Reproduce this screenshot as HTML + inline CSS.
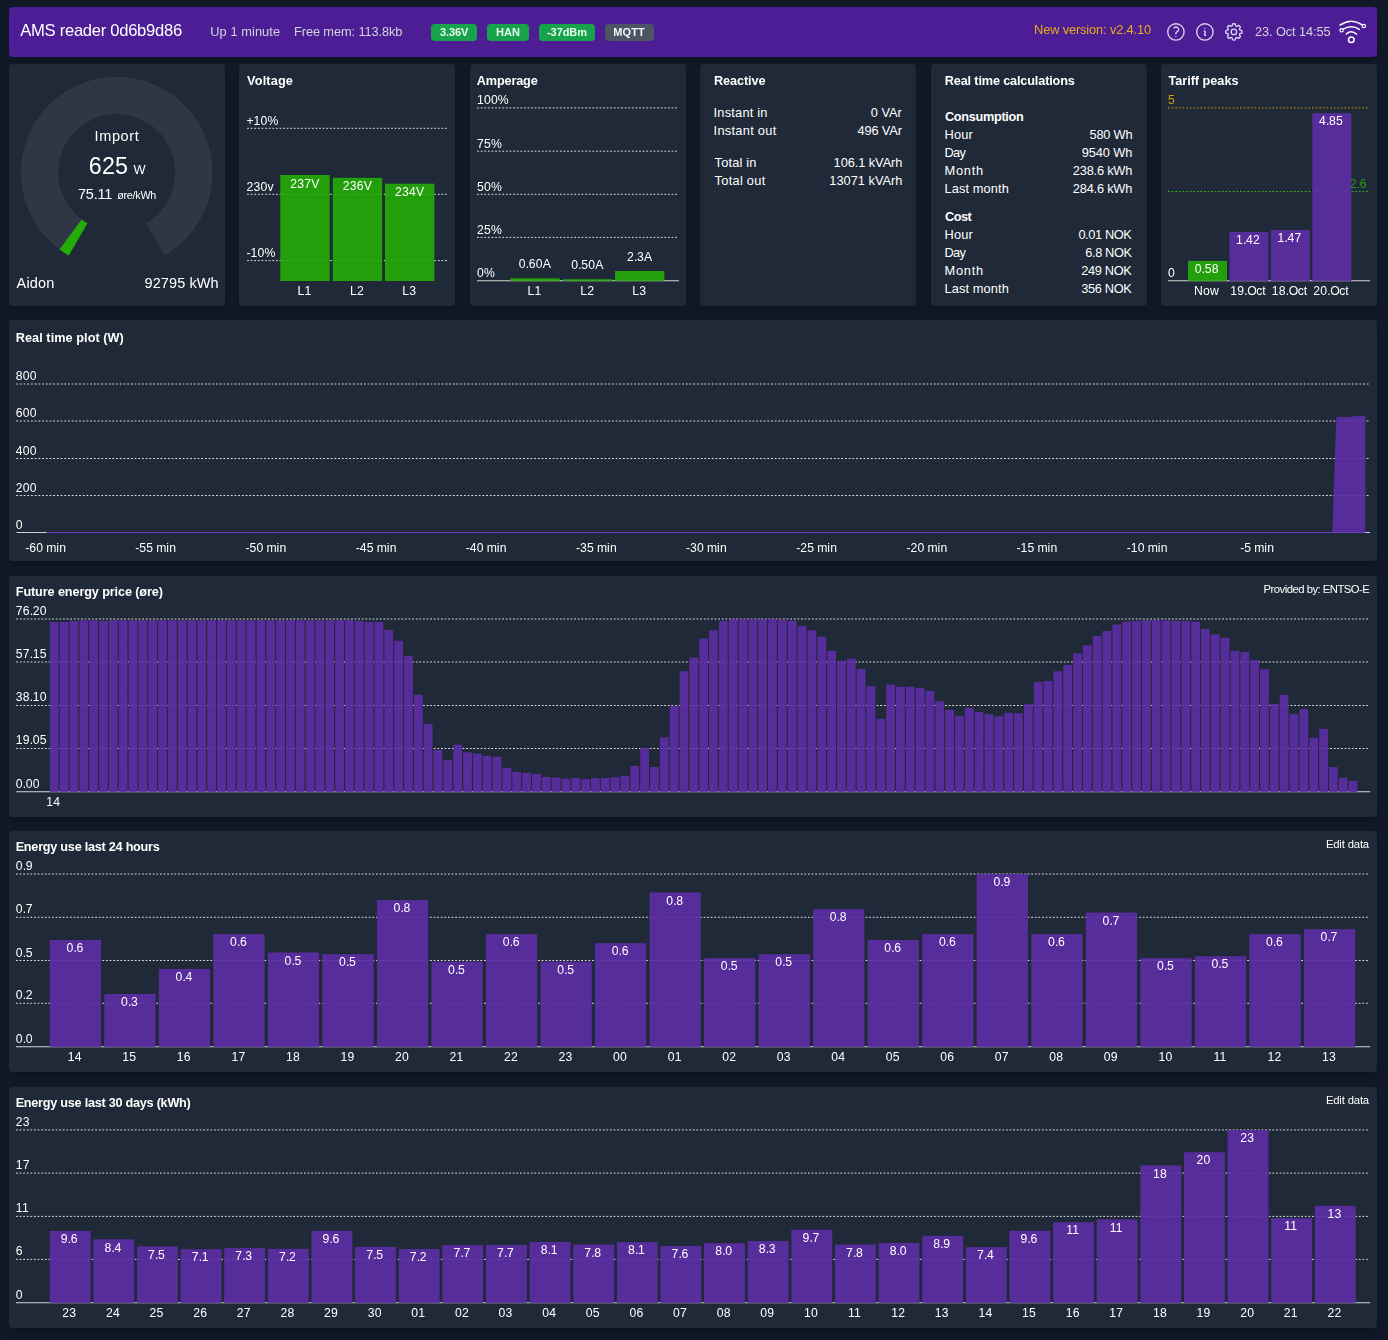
<!DOCTYPE html>
<html lang="en"><head><meta charset="utf-8"><title>AMS reader</title>
<style>
html,body{margin:0;padding:0;background:#111827}
body{position:relative;width:1388px;height:1340px;overflow:hidden;font-family:"Liberation Sans",sans-serif;color:#fff}
.hdr{position:absolute;left:9px;top:7px;width:1368px;height:50px;background:#4c1d95;border-radius:3.75px;box-shadow:0 4px 6px -1px rgba(0,0,0,.2)}
.cnt{position:absolute;background:#1f2937;border-radius:3.75px;box-shadow:0 8px 12px -3px rgba(0,0,0,.12),0 3px 5px -2px rgba(0,0,0,.1)}
.bd{position:absolute;top:24px;height:17px;border-radius:3.75px}
.t{position:absolute;white-space:pre;line-height:1}
.c{position:absolute;overflow:visible;will-change:transform}
</style></head><body>
<nav class="hdr"></nav>
<div class="bd" style="left:431px;width:46px;background:#16a34a"></div><div class="bd" style="left:487px;width:42px;background:#16a34a"></div><div class="bd" style="left:539px;width:56px;background:#16a34a"></div><div class="bd" style="left:605px;width:49px;background:#4b5563"></div>
<div class="cnt" style="left:9px;top:64px;width:216px;height:242px"></div><div class="cnt" style="left:239px;top:64px;width:216px;height:242px"></div><div class="cnt" style="left:470px;top:64px;width:216px;height:242px"></div><div class="cnt" style="left:700px;top:64px;width:216px;height:242px"></div><div class="cnt" style="left:931px;top:64px;width:216px;height:242px"></div><div class="cnt" style="left:1161px;top:64px;width:216px;height:242px"></div><div class="cnt" style="left:9px;top:320px;width:1368px;height:241px"></div><div class="cnt" style="left:9px;top:576px;width:1368px;height:241px"></div><div class="cnt" style="left:9px;top:831px;width:1368px;height:241px"></div><div class="cnt" style="left:9px;top:1087px;width:1368px;height:241px"></div>
<svg class="c" style="left:9px;top:64px" width="216" height="242" viewBox="9 64 216 242" font-family="Liberation Sans, sans-serif" font-size="12.2" fill="#fff"><path d="M 155.27 239.41 A 77.15 77.15 0 1 0 78.13 239.41" fill="none" stroke="#2f3744" stroke-width="37.3"/><path d="M 70.59 234.46 A 77.15 77.15 0 0 0 78.13 239.41" fill="none" stroke="#25ac08" stroke-width="37.3"/></svg>
<svg class="c" style="left:239px;top:64px" width="217" height="242" viewBox="239 64 217 242" font-family="Liberation Sans, sans-serif" font-size="12.2" fill="#fff"><line x1="247.1" y1="128.3" x2="447.1" y2="128.3" stroke="#dedede" stroke-width="1.0" stroke-dasharray="1.8 1.8"/><line x1="247.1" y1="194.3" x2="447.1" y2="194.3" stroke="#dedede" stroke-width="1.0" stroke-dasharray="1.8 1.8"/><line x1="247.1" y1="260.6" x2="447.1" y2="260.6" stroke="#dedede" stroke-width="1.0" stroke-dasharray="1.8 1.8"/><text x="246.6" y="125" dx="0 -0.12 0.21 0.21">+10%</text><text x="246.6" y="191" dx="0 0.21 0.21 0.21">230v</text><text x="246.6" y="257" dx="0 -0.06 0.21 0.21">-10%</text><rect x="280.3" y="175" width="49.4" height="106" fill="#25ac08" fill-opacity="0.9"/><rect x="332.8" y="177.8" width="49.4" height="103.2" fill="#25ac08" fill-opacity="0.9"/><rect x="385" y="183.7" width="49.4" height="97.3" fill="#25ac08" fill-opacity="0.9"/><text x="304.77" y="187.6" text-anchor="middle" dx="0 0.21 0.21 0.21">237V</text><text x="304.49" y="295" text-anchor="middle" dx="0 0.21">L1</text><text x="357.27" y="190.4" text-anchor="middle" dx="0 0.21 0.21 0.21">236V</text><text x="356.99" y="295" text-anchor="middle" dx="0 0.21">L2</text><text x="409.47" y="196.3" text-anchor="middle" dx="0 0.21 0.21 0.21">234V</text><text x="409.19" y="295" text-anchor="middle" dx="0 0.21">L3</text></svg>
<svg class="c" style="left:470px;top:64px" width="217" height="242" viewBox="470 64 217 242" font-family="Liberation Sans, sans-serif" font-size="12.2" fill="#fff"><line x1="477.1" y1="107.9" x2="677.1" y2="107.9" stroke="#dedede" stroke-width="1.0" stroke-dasharray="1.8 1.8"/><line x1="477.1" y1="151.2" x2="677.1" y2="151.2" stroke="#dedede" stroke-width="1.0" stroke-dasharray="1.8 1.8"/><line x1="477.1" y1="194.3" x2="677.1" y2="194.3" stroke="#dedede" stroke-width="1.0" stroke-dasharray="1.8 1.8"/><line x1="477.1" y1="237.4" x2="677.1" y2="237.4" stroke="#dedede" stroke-width="1.0" stroke-dasharray="1.8 1.8"/><line x1="477" y1="280.8" x2="679" y2="280.8" stroke="#d8d8d8" stroke-width="1.1"/><text x="476.9" y="104" dx="0 0.21 0.21 0.21">100%</text><text x="476.9" y="148" dx="0 0.21 0.21">75%</text><text x="476.9" y="191" dx="0 0.21 0.21">50%</text><text x="476.9" y="234" dx="0 0.21 0.21">25%</text><text x="476.9" y="277" dx="0 0.21">0%</text><rect x="510.3" y="278.3" width="49.4" height="2.7" fill="#25ac08" fill-opacity="0.9"/><rect x="562.9" y="279.2" width="49.4" height="1.8" fill="#25ac08" fill-opacity="0.9"/><rect x="615" y="271" width="49.4" height="10" fill="#25ac08" fill-opacity="0.9"/><text x="534.77" y="267.5" text-anchor="middle" dx="0 0.21 -0.39 0.21 0.21">0.60A</text><text x="534.49" y="295" text-anchor="middle" dx="0 0.21">L1</text><text x="587.37" y="268.6" text-anchor="middle" dx="0 0.21 -0.39 0.21 0.21">0.50A</text><text x="587.09" y="295" text-anchor="middle" dx="0 0.21">L2</text><text x="639.47" y="260.6" text-anchor="middle" dx="0 0.21 -0.39 0.21">2.3A</text><text x="639.19" y="295" text-anchor="middle" dx="0 0.21">L3</text></svg>
<svg class="c" style="left:1161px;top:64px" width="217" height="242" viewBox="1161 64 217 242" font-family="Liberation Sans, sans-serif" font-size="12.2" fill="#fff"><line x1="1168" y1="107.9" x2="1368" y2="107.9" stroke="#b8960c" stroke-width="1.0" stroke-dasharray="1.8 1.8"/><line x1="1168" y1="191.5" x2="1368" y2="191.5" stroke="#2fb010" stroke-width="1.0" stroke-dasharray="1.8 1.8"/><line x1="1168" y1="280.8" x2="1370" y2="280.8" stroke="#d8d8d8" stroke-width="1.1"/><text x="1167.9" y="104" fill="#c9a410">5</text><text x="1366.59" y="188" text-anchor="end" fill="#2a9a12" dx="0 0.21 -0.39">2.6</text><text x="1167.9" y="277">0</text><rect x="1188" y="260.9" width="39" height="20.1" fill="#25ac08" fill-opacity="0.9"/><rect x="1229.4" y="232" width="39" height="49" fill="#5c2da5" fill-opacity="0.9"/><rect x="1270.9" y="230" width="39" height="51" fill="#5c2da5" fill-opacity="0.9"/><rect x="1312.3" y="113.2" width="39" height="167.8" fill="#5c2da5" fill-opacity="0.9"/><text x="1206.59" y="273.1" text-anchor="middle" dx="0 0.21 -0.39 0.21">0.58</text><text x="1206.31" y="295" text-anchor="middle" dx="0 0.19 0.21">Now</text><text x="1247.99" y="244.2" text-anchor="middle" dx="0 0.21 -0.39 0.21">1.42</text><text x="1247.99" y="295" text-anchor="middle" dx="0 0.21 0.21 -0.39 -0.49 -0.1">19.Oct</text><text x="1289.49" y="242.2" text-anchor="middle" dx="0 0.21 -0.39 0.21">1.47</text><text x="1289.49" y="295" text-anchor="middle" dx="0 0.21 0.21 -0.39 -0.49 -0.1">18.Oct</text><text x="1330.89" y="125.4" text-anchor="middle" dx="0 0.21 -0.39 0.21">4.85</text><text x="1330.89" y="295" text-anchor="middle" dx="0 0.21 0.21 -0.39 -0.49 -0.1">20.Oct</text></svg>
<svg class="c" style="left:9px;top:320px" width="1369" height="241" viewBox="9 320 1369 241" font-family="Liberation Sans, sans-serif" font-size="12.2" fill="#fff"><line x1="16.2" y1="384" x2="1370" y2="384" stroke="#dedede" stroke-width="1.0" stroke-dasharray="1.85 1.85"/><line x1="16.2" y1="421" x2="1370" y2="421" stroke="#dedede" stroke-width="1.0" stroke-dasharray="1.85 1.85"/><line x1="16.2" y1="458.5" x2="1370" y2="458.5" stroke="#dedede" stroke-width="1.0" stroke-dasharray="1.85 1.85"/><line x1="16.2" y1="495.5" x2="1370" y2="495.5" stroke="#dedede" stroke-width="1.0" stroke-dasharray="1.85 1.85"/><line x1="16.5" y1="532.5" x2="1370" y2="532.5" stroke="#d0d0d0" stroke-width="1"/><text x="15.8" y="380" dx="0 0.21 0.21">800</text><text x="15.8" y="417" dx="0 0.21 0.21">600</text><text x="15.8" y="455" dx="0 0.21 0.21">400</text><text x="15.8" y="492" dx="0 0.21 0.21">200</text><text x="15.8" y="529">0</text><text x="45.59" y="552" text-anchor="middle" dx="0 -0.06 0.21 0.21 -0.39 -0.16 0.29">-60 min</text><text x="155.74" y="552" text-anchor="middle" dx="0 -0.06 0.21 0.21 -0.39 -0.16 0.29">-55 min</text><text x="265.89" y="552" text-anchor="middle" dx="0 -0.06 0.21 0.21 -0.39 -0.16 0.29">-50 min</text><text x="376.04" y="552" text-anchor="middle" dx="0 -0.06 0.21 0.21 -0.39 -0.16 0.29">-45 min</text><text x="486.19" y="552" text-anchor="middle" dx="0 -0.06 0.21 0.21 -0.39 -0.16 0.29">-40 min</text><text x="596.34" y="552" text-anchor="middle" dx="0 -0.06 0.21 0.21 -0.39 -0.16 0.29">-35 min</text><text x="706.49" y="552" text-anchor="middle" dx="0 -0.06 0.21 0.21 -0.39 -0.16 0.29">-30 min</text><text x="816.64" y="552" text-anchor="middle" dx="0 -0.06 0.21 0.21 -0.39 -0.16 0.29">-25 min</text><text x="926.79" y="552" text-anchor="middle" dx="0 -0.06 0.21 0.21 -0.39 -0.16 0.29">-20 min</text><text x="1036.94" y="552" text-anchor="middle" dx="0 -0.06 0.21 0.21 -0.39 -0.16 0.29">-15 min</text><text x="1147.09" y="552" text-anchor="middle" dx="0 -0.06 0.21 0.21 -0.39 -0.16 0.29">-10 min</text><text x="1257.24" y="552" text-anchor="middle" dx="0 -0.06 0.21 -0.39 -0.16 0.29">-5 min</text><path d="M 1332.3 532 L 1336.3 417 L 1350.7 417 L 1353.7 416 L 1365.4 415.8 L 1365.4 532 Z" fill="#5c2da5" fill-opacity="0.9"/><line x1="46.4" y1="532.5" x2="1365.4" y2="532.5" stroke="#6f42bd" stroke-width="1"/></svg>
<svg class="c" style="left:9px;top:576px" width="1369" height="241" viewBox="9 576 1369 241" font-family="Liberation Sans, sans-serif" font-size="12.2" fill="#fff"><line x1="16.2" y1="619" x2="1368.1" y2="619" stroke="#dedede" stroke-width="1.0" stroke-dasharray="1.8 1.8"/><line x1="16.2" y1="662" x2="1368.1" y2="662" stroke="#dedede" stroke-width="1.0" stroke-dasharray="1.8 1.8"/><line x1="16.2" y1="705.5" x2="1368.1" y2="705.5" stroke="#dedede" stroke-width="1.0" stroke-dasharray="1.8 1.8"/><line x1="16.2" y1="748.5" x2="1368.1" y2="748.5" stroke="#dedede" stroke-width="1.0" stroke-dasharray="1.8 1.8"/><line x1="16.2" y1="791.8" x2="1370.2" y2="791.8" stroke="#d8d8d8" stroke-width="1.1"/><text x="15.8" y="615" dx="0 0.21 0.21 -0.39 0.21">76.20</text><text x="15.8" y="658" dx="0 0.21 0.21 -0.39 0.21">57.15</text><text x="15.8" y="701" dx="0 0.21 0.21 -0.39 0.21">38.10</text><text x="15.8" y="744" dx="0 0.21 0.21 -0.39 0.21">19.05</text><text x="15.8" y="788" dx="0 0.21 -0.39 0.21">0.00</text><path d="M49.86 621.96h8.8V792h-8.8zM59.7 621.96h8.8V792h-8.8zM69.54 621.1h8.8V792h-8.8zM79.38 620.23h8.8V792h-8.8zM89.22 620.23h8.8V792h-8.8zM99.06 621.1h8.8V792h-8.8zM108.89 620.23h8.8V792h-8.8zM118.73 620.23h8.8V792h-8.8zM128.57 620.23h8.8V792h-8.8zM138.41 620.23h8.8V792h-8.8zM148.25 620.23h8.8V792h-8.8zM158.09 620.23h8.8V792h-8.8zM167.93 620.23h8.8V792h-8.8zM177.77 620.23h8.8V792h-8.8zM187.61 620.23h8.8V792h-8.8zM197.44 620.23h8.8V792h-8.8zM207.28 620.23h8.8V792h-8.8zM217.12 620.23h8.8V792h-8.8zM226.96 620.23h8.8V792h-8.8zM236.8 620.23h8.8V792h-8.8zM246.64 620.23h8.8V792h-8.8zM256.48 620.23h8.8V792h-8.8zM266.32 620.23h8.8V792h-8.8zM276.16 620.23h8.8V792h-8.8zM286 620.23h8.8V792h-8.8zM295.84 620.23h8.8V792h-8.8zM305.67 620.23h8.8V792h-8.8zM315.51 620.23h8.8V792h-8.8zM325.35 620.23h8.8V792h-8.8zM335.19 620.23h8.8V792h-8.8zM345.03 620.23h8.8V792h-8.8zM354.87 621.1h8.8V792h-8.8zM364.71 621.96h8.8V792h-8.8zM374.55 621.96h8.8V792h-8.8zM384.39 629.92h8.8V792h-8.8zM394.23 640.64h8.8V792h-8.8zM404.06 656.03h8.8V792h-8.8zM413.9 694.76h8.8V792h-8.8zM423.74 723.98h8.8V792h-8.8zM433.58 750.1h8.8V792h-8.8zM443.42 760.3h8.8V792h-8.8zM453.26 744.73h8.8V792h-8.8zM463.1 752.34h8.8V792h-8.8zM472.94 753.55h8.8V792h-8.8zM482.78 755.97h8.8V792h-8.8zM492.62 756.84h8.8V792h-8.8zM502.45 767.73h8.8V792h-8.8zM512.29 772.06h8.8V792h-8.8zM522.13 773.09h8.8V792h-8.8zM531.97 773.96h8.8V792h-8.8zM541.81 776.9h8.8V792h-8.8zM551.65 777.59h8.8V792h-8.8zM561.49 778.63h8.8V792h-8.8zM571.33 778.11h8.8V792h-8.8zM581.17 778.97h8.8V792h-8.8zM591 778.28h8.8V792h-8.8zM600.84 777.94h8.8V792h-8.8zM610.68 777.24h8.8V792h-8.8zM620.52 775.69h8.8V792h-8.8zM630.36 766h8.8V792h-8.8zM640.2 748.02h8.8V792h-8.8zM650.04 767.04h8.8V792h-8.8zM659.88 737.13h8.8V792h-8.8zM669.72 705.83h8.8V792h-8.8zM679.56 671.24h8.8V792h-8.8zM689.4 657.41h8.8V792h-8.8zM699.23 638.56h8.8V792h-8.8zM709.07 630.26h8.8V792h-8.8zM718.91 621.1h8.8V792h-8.8zM728.75 619.37h8.8V792h-8.8zM738.59 619.02h8.8V792h-8.8zM748.43 619.02h8.8V792h-8.8zM758.27 619.37h8.8V792h-8.8zM768.11 619.02h8.8V792h-8.8zM777.95 619.71h8.8V792h-8.8zM787.79 620.75h8.8V792h-8.8zM797.62 625.94h8.8V792h-8.8zM807.46 630.26h8.8V792h-8.8zM817.3 636.83h8.8V792h-8.8zM827.14 650.84h8.8V792h-8.8zM836.98 660.87h8.8V792h-8.8zM846.82 658.45h8.8V792h-8.8zM856.66 669h8.8V792h-8.8zM866.5 686.29h8.8V792h-8.8zM876.34 718.8h8.8V792h-8.8zM886.18 684.56h8.8V792h-8.8zM896.01 686.81h8.8V792h-8.8zM905.85 686.81h8.8V792h-8.8zM915.69 688.02h8.8V792h-8.8zM925.53 690.96h8.8V792h-8.8zM935.37 701.16h8.8V792h-8.8zM945.21 709.98h8.8V792h-8.8zM955.05 715.86h8.8V792h-8.8zM964.89 707.9h8.8V792h-8.8zM974.73 712.05h8.8V792h-8.8zM984.57 714.13h8.8V792h-8.8zM994.4 716.2h8.8V792h-8.8zM1004.24 712.74h8.8V792h-8.8zM1014.08 713.26h8.8V792h-8.8zM1023.92 704.27h8.8V792h-8.8zM1033.76 681.96h8.8V792h-8.8zM1043.6 680.93h8.8V792h-8.8zM1053.44 671.24h8.8V792h-8.8zM1063.28 665.02h8.8V792h-8.8zM1073.12 653.26h8.8V792h-8.8zM1082.95 645.31h8.8V792h-8.8zM1092.79 635.97h8.8V792h-8.8zM1102.63 630.95h8.8V792h-8.8zM1112.47 624.38h8.8V792h-8.8zM1122.31 621.62h8.8V792h-8.8zM1132.15 620.92h8.8V792h-8.8zM1141.99 620.23h8.8V792h-8.8zM1151.83 619.89h8.8V792h-8.8zM1161.67 620.4h8.8V792h-8.8zM1171.51 620.75h8.8V792h-8.8zM1181.35 620.92h8.8V792h-8.8zM1191.18 621.79h8.8V792h-8.8zM1201.02 628.88h8.8V792h-8.8zM1210.86 634.58h8.8V792h-8.8zM1220.7 638.04h8.8V792h-8.8zM1230.54 650.84h8.8V792h-8.8zM1240.38 651.88h8.8V792h-8.8zM1250.22 660h8.8V792h-8.8zM1260.06 669.17h8.8V792h-8.8zM1269.9 703.75h8.8V792h-8.8zM1279.73 694.76h8.8V792h-8.8zM1289.57 713.95h8.8V792h-8.8zM1299.41 708.94h8.8V792h-8.8zM1309.25 737.64h8.8V792h-8.8zM1319.09 728.83h8.8V792h-8.8zM1328.93 767.04h8.8V792h-8.8zM1338.77 777.76h8.8V792h-8.8zM1348.61 781.05h8.8V792h-8.8z" fill="#5c2da5" fill-opacity="0.9"/><text x="53.09" y="806" text-anchor="middle" dx="0 0.21">14</text></svg>
<svg class="c" style="left:9px;top:831px" width="1369" height="241" viewBox="9 831 1369 241" font-family="Liberation Sans, sans-serif" font-size="12.2" fill="#fff"><line x1="16" y1="874" x2="1368" y2="874" stroke="#dedede" stroke-width="1.0" stroke-dasharray="1.8 1.8"/><line x1="16" y1="917.3" x2="1368" y2="917.3" stroke="#dedede" stroke-width="1.0" stroke-dasharray="1.8 1.8"/><line x1="16" y1="960.5" x2="1368" y2="960.5" stroke="#dedede" stroke-width="1.0" stroke-dasharray="1.8 1.8"/><line x1="16" y1="1003.3" x2="1368" y2="1003.3" stroke="#dedede" stroke-width="1.0" stroke-dasharray="1.8 1.8"/><line x1="16" y1="1046.8" x2="1370" y2="1046.8" stroke="#d8d8d8" stroke-width="1.1"/><text x="15.8" y="870" dx="0 0.21 -0.39">0.9</text><text x="15.8" y="913" dx="0 0.21 -0.39">0.7</text><text x="15.8" y="957" dx="0 0.21 -0.39">0.5</text><text x="15.8" y="999" dx="0 0.21 -0.39">0.2</text><text x="15.8" y="1043" dx="0 0.21 -0.39">0.0</text><rect x="49.7" y="940" width="51.3" height="107" fill="#5c2da5" fill-opacity="0.9"/><rect x="104.23" y="994" width="51.3" height="53" fill="#5c2da5" fill-opacity="0.9"/><rect x="158.76" y="968.9" width="51.3" height="78.1" fill="#5c2da5" fill-opacity="0.9"/><rect x="213.29" y="934.1" width="51.3" height="112.9" fill="#5c2da5" fill-opacity="0.9"/><rect x="267.82" y="952.5" width="51.3" height="94.5" fill="#5c2da5" fill-opacity="0.9"/><rect x="322.35" y="954.2" width="51.3" height="92.8" fill="#5c2da5" fill-opacity="0.9"/><rect x="376.88" y="900" width="51.3" height="147" fill="#5c2da5" fill-opacity="0.9"/><rect x="431.41" y="961.6" width="51.3" height="85.4" fill="#5c2da5" fill-opacity="0.9"/><rect x="485.94" y="934.1" width="51.3" height="112.9" fill="#5c2da5" fill-opacity="0.9"/><rect x="540.47" y="961.6" width="51.3" height="85.4" fill="#5c2da5" fill-opacity="0.9"/><rect x="595" y="943.2" width="51.3" height="103.8" fill="#5c2da5" fill-opacity="0.9"/><rect x="649.53" y="892.4" width="51.3" height="154.6" fill="#5c2da5" fill-opacity="0.9"/><rect x="704.06" y="958.1" width="51.3" height="88.9" fill="#5c2da5" fill-opacity="0.9"/><rect x="758.59" y="954.2" width="51.3" height="92.8" fill="#5c2da5" fill-opacity="0.9"/><rect x="813.12" y="909.1" width="51.3" height="137.9" fill="#5c2da5" fill-opacity="0.9"/><rect x="867.65" y="940" width="51.3" height="107" fill="#5c2da5" fill-opacity="0.9"/><rect x="922.18" y="934.1" width="51.3" height="112.9" fill="#5c2da5" fill-opacity="0.9"/><rect x="976.71" y="874" width="51.3" height="173" fill="#5c2da5" fill-opacity="0.9"/><rect x="1031.24" y="934.1" width="51.3" height="112.9" fill="#5c2da5" fill-opacity="0.9"/><rect x="1085.77" y="912.5" width="51.3" height="134.5" fill="#5c2da5" fill-opacity="0.9"/><rect x="1140.3" y="958.1" width="51.3" height="88.9" fill="#5c2da5" fill-opacity="0.9"/><rect x="1194.83" y="956.2" width="51.3" height="90.8" fill="#5c2da5" fill-opacity="0.9"/><rect x="1249.36" y="934.1" width="51.3" height="112.9" fill="#5c2da5" fill-opacity="0.9"/><rect x="1303.89" y="929.2" width="51.3" height="117.8" fill="#5c2da5" fill-opacity="0.9"/><text x="74.79" y="952.2" text-anchor="middle" dx="0 0.21 -0.39">0.6</text><text x="74.69" y="1061" text-anchor="middle" dx="0 0.21">14</text><text x="129.32" y="1006.2" text-anchor="middle" dx="0 0.21 -0.39">0.3</text><text x="129.22" y="1061" text-anchor="middle" dx="0 0.21">15</text><text x="183.85" y="981.1" text-anchor="middle" dx="0 0.21 -0.39">0.4</text><text x="183.75" y="1061" text-anchor="middle" dx="0 0.21">16</text><text x="238.38" y="946.3" text-anchor="middle" dx="0 0.21 -0.39">0.6</text><text x="238.28" y="1061" text-anchor="middle" dx="0 0.21">17</text><text x="292.91" y="964.7" text-anchor="middle" dx="0 0.21 -0.39">0.5</text><text x="292.81" y="1061" text-anchor="middle" dx="0 0.21">18</text><text x="347.44" y="966.4" text-anchor="middle" dx="0 0.21 -0.39">0.5</text><text x="347.34" y="1061" text-anchor="middle" dx="0 0.21">19</text><text x="401.97" y="912.2" text-anchor="middle" dx="0 0.21 -0.39">0.8</text><text x="401.87" y="1061" text-anchor="middle" dx="0 0.21">20</text><text x="456.5" y="973.8" text-anchor="middle" dx="0 0.21 -0.39">0.5</text><text x="456.4" y="1061" text-anchor="middle" dx="0 0.21">21</text><text x="511.03" y="946.3" text-anchor="middle" dx="0 0.21 -0.39">0.6</text><text x="510.93" y="1061" text-anchor="middle" dx="0 0.21">22</text><text x="565.56" y="973.8" text-anchor="middle" dx="0 0.21 -0.39">0.5</text><text x="565.46" y="1061" text-anchor="middle" dx="0 0.21">23</text><text x="620.09" y="955.4" text-anchor="middle" dx="0 0.21 -0.39">0.6</text><text x="619.99" y="1061" text-anchor="middle" dx="0 0.21">00</text><text x="674.62" y="904.6" text-anchor="middle" dx="0 0.21 -0.39">0.8</text><text x="674.52" y="1061" text-anchor="middle" dx="0 0.21">01</text><text x="729.15" y="970.3" text-anchor="middle" dx="0 0.21 -0.39">0.5</text><text x="729.05" y="1061" text-anchor="middle" dx="0 0.21">02</text><text x="783.68" y="966.4" text-anchor="middle" dx="0 0.21 -0.39">0.5</text><text x="783.58" y="1061" text-anchor="middle" dx="0 0.21">03</text><text x="838.21" y="921.3" text-anchor="middle" dx="0 0.21 -0.39">0.8</text><text x="838.11" y="1061" text-anchor="middle" dx="0 0.21">04</text><text x="892.74" y="952.2" text-anchor="middle" dx="0 0.21 -0.39">0.6</text><text x="892.64" y="1061" text-anchor="middle" dx="0 0.21">05</text><text x="947.27" y="946.3" text-anchor="middle" dx="0 0.21 -0.39">0.6</text><text x="947.17" y="1061" text-anchor="middle" dx="0 0.21">06</text><text x="1001.8" y="886.2" text-anchor="middle" dx="0 0.21 -0.39">0.9</text><text x="1001.7" y="1061" text-anchor="middle" dx="0 0.21">07</text><text x="1056.33" y="946.3" text-anchor="middle" dx="0 0.21 -0.39">0.6</text><text x="1056.23" y="1061" text-anchor="middle" dx="0 0.21">08</text><text x="1110.86" y="924.7" text-anchor="middle" dx="0 0.21 -0.39">0.7</text><text x="1110.76" y="1061" text-anchor="middle" dx="0 0.21">09</text><text x="1165.39" y="970.3" text-anchor="middle" dx="0 0.21 -0.39">0.5</text><text x="1165.29" y="1061" text-anchor="middle" dx="0 0.21">10</text><text x="1219.92" y="968.4" text-anchor="middle" dx="0 0.21 -0.39">0.5</text><text x="1219.82" y="1061" text-anchor="middle" dx="0 0.21">11</text><text x="1274.45" y="946.3" text-anchor="middle" dx="0 0.21 -0.39">0.6</text><text x="1274.35" y="1061" text-anchor="middle" dx="0 0.21">12</text><text x="1328.98" y="941.4" text-anchor="middle" dx="0 0.21 -0.39">0.7</text><text x="1328.88" y="1061" text-anchor="middle" dx="0 0.21">13</text></svg>
<svg class="c" style="left:9px;top:1087px" width="1369" height="241" viewBox="9 1087 1369 241" font-family="Liberation Sans, sans-serif" font-size="12.2" fill="#fff"><line x1="16" y1="1129.9" x2="1368" y2="1129.9" stroke="#dedede" stroke-width="1.0" stroke-dasharray="1.8 1.8"/><line x1="16" y1="1173.1" x2="1368" y2="1173.1" stroke="#dedede" stroke-width="1.0" stroke-dasharray="1.8 1.8"/><line x1="16" y1="1216.4" x2="1368" y2="1216.4" stroke="#dedede" stroke-width="1.0" stroke-dasharray="1.8 1.8"/><line x1="16" y1="1259.4" x2="1368" y2="1259.4" stroke="#dedede" stroke-width="1.0" stroke-dasharray="1.8 1.8"/><line x1="16" y1="1302.8" x2="1370" y2="1302.8" stroke="#d8d8d8" stroke-width="1.1"/><text x="15.8" y="1126" dx="0 0.21">23</text><text x="15.8" y="1169" dx="0 0.21">17</text><text x="15.8" y="1212" dx="0 0.21">11</text><text x="15.8" y="1255">6</text><text x="15.8" y="1299">0</text><rect x="49.7" y="1230.9" width="40.9" height="72.1" fill="#5c2da5" fill-opacity="0.9"/><rect x="93.33" y="1239.3" width="40.9" height="63.7" fill="#5c2da5" fill-opacity="0.9"/><rect x="136.95" y="1246.4" width="40.9" height="56.6" fill="#5c2da5" fill-opacity="0.9"/><rect x="180.57" y="1249.2" width="40.9" height="53.8" fill="#5c2da5" fill-opacity="0.9"/><rect x="224.2" y="1248.1" width="40.9" height="54.9" fill="#5c2da5" fill-opacity="0.9"/><rect x="267.82" y="1248.8" width="40.9" height="54.2" fill="#5c2da5" fill-opacity="0.9"/><rect x="311.45" y="1230.8" width="40.9" height="72.2" fill="#5c2da5" fill-opacity="0.9"/><rect x="355.07" y="1246.8" width="40.9" height="56.2" fill="#5c2da5" fill-opacity="0.9"/><rect x="398.7" y="1249" width="40.9" height="54" fill="#5c2da5" fill-opacity="0.9"/><rect x="442.32" y="1245.1" width="40.9" height="57.9" fill="#5c2da5" fill-opacity="0.9"/><rect x="485.95" y="1244.9" width="40.9" height="58.1" fill="#5c2da5" fill-opacity="0.9"/><rect x="529.58" y="1241.9" width="40.9" height="61.1" fill="#5c2da5" fill-opacity="0.9"/><rect x="573.2" y="1244.5" width="40.9" height="58.5" fill="#5c2da5" fill-opacity="0.9"/><rect x="616.83" y="1242.1" width="40.9" height="60.9" fill="#5c2da5" fill-opacity="0.9"/><rect x="660.45" y="1246" width="40.9" height="57" fill="#5c2da5" fill-opacity="0.9"/><rect x="704.08" y="1243.2" width="40.9" height="59.8" fill="#5c2da5" fill-opacity="0.9"/><rect x="747.7" y="1241" width="40.9" height="62" fill="#5c2da5" fill-opacity="0.9"/><rect x="791.33" y="1229.8" width="40.9" height="73.2" fill="#5c2da5" fill-opacity="0.9"/><rect x="834.95" y="1244.5" width="40.9" height="58.5" fill="#5c2da5" fill-opacity="0.9"/><rect x="878.58" y="1242.9" width="40.9" height="60.1" fill="#5c2da5" fill-opacity="0.9"/><rect x="922.2" y="1235.8" width="40.9" height="67.2" fill="#5c2da5" fill-opacity="0.9"/><rect x="965.83" y="1247.1" width="40.9" height="55.9" fill="#5c2da5" fill-opacity="0.9"/><rect x="1009.45" y="1230.8" width="40.9" height="72.2" fill="#5c2da5" fill-opacity="0.9"/><rect x="1053.08" y="1222.2" width="40.9" height="80.8" fill="#5c2da5" fill-opacity="0.9"/><rect x="1096.7" y="1219.4" width="40.9" height="83.6" fill="#5c2da5" fill-opacity="0.9"/><rect x="1140.33" y="1165.4" width="40.9" height="137.6" fill="#5c2da5" fill-opacity="0.9"/><rect x="1183.95" y="1152.2" width="40.9" height="150.8" fill="#5c2da5" fill-opacity="0.9"/><rect x="1227.58" y="1130.1" width="40.9" height="172.9" fill="#5c2da5" fill-opacity="0.9"/><rect x="1271.2" y="1218.1" width="40.9" height="84.9" fill="#5c2da5" fill-opacity="0.9"/><rect x="1314.83" y="1205.8" width="40.9" height="97.2" fill="#5c2da5" fill-opacity="0.9"/><text x="69.19" y="1243.1" text-anchor="middle" dx="0 0.21 -0.39">9.6</text><text x="69.19" y="1317" text-anchor="middle" dx="0 0.21">23</text><text x="112.82" y="1251.5" text-anchor="middle" dx="0 0.21 -0.39">8.4</text><text x="112.82" y="1317" text-anchor="middle" dx="0 0.21">24</text><text x="156.44" y="1258.6" text-anchor="middle" dx="0 0.21 -0.39">7.5</text><text x="156.44" y="1317" text-anchor="middle" dx="0 0.21">25</text><text x="200.07" y="1261.4" text-anchor="middle" dx="0 0.21 -0.39">7.1</text><text x="200.07" y="1317" text-anchor="middle" dx="0 0.21">26</text><text x="243.69" y="1260.3" text-anchor="middle" dx="0 0.21 -0.39">7.3</text><text x="243.69" y="1317" text-anchor="middle" dx="0 0.21">27</text><text x="287.32" y="1261" text-anchor="middle" dx="0 0.21 -0.39">7.2</text><text x="287.32" y="1317" text-anchor="middle" dx="0 0.21">28</text><text x="330.94" y="1243" text-anchor="middle" dx="0 0.21 -0.39">9.6</text><text x="330.94" y="1317" text-anchor="middle" dx="0 0.21">29</text><text x="374.57" y="1259" text-anchor="middle" dx="0 0.21 -0.39">7.5</text><text x="374.57" y="1317" text-anchor="middle" dx="0 0.21">30</text><text x="418.19" y="1261.2" text-anchor="middle" dx="0 0.21 -0.39">7.2</text><text x="418.19" y="1317" text-anchor="middle" dx="0 0.21">01</text><text x="461.82" y="1257.3" text-anchor="middle" dx="0 0.21 -0.39">7.7</text><text x="461.82" y="1317" text-anchor="middle" dx="0 0.21">02</text><text x="505.44" y="1257.1" text-anchor="middle" dx="0 0.21 -0.39">7.7</text><text x="505.44" y="1317" text-anchor="middle" dx="0 0.21">03</text><text x="549.07" y="1254.1" text-anchor="middle" dx="0 0.21 -0.39">8.1</text><text x="549.07" y="1317" text-anchor="middle" dx="0 0.21">04</text><text x="592.69" y="1256.7" text-anchor="middle" dx="0 0.21 -0.39">7.8</text><text x="592.69" y="1317" text-anchor="middle" dx="0 0.21">05</text><text x="636.32" y="1254.3" text-anchor="middle" dx="0 0.21 -0.39">8.1</text><text x="636.32" y="1317" text-anchor="middle" dx="0 0.21">06</text><text x="679.94" y="1258.2" text-anchor="middle" dx="0 0.21 -0.39">7.6</text><text x="679.94" y="1317" text-anchor="middle" dx="0 0.21">07</text><text x="723.57" y="1255.4" text-anchor="middle" dx="0 0.21 -0.39">8.0</text><text x="723.57" y="1317" text-anchor="middle" dx="0 0.21">08</text><text x="767.19" y="1253.2" text-anchor="middle" dx="0 0.21 -0.39">8.3</text><text x="767.19" y="1317" text-anchor="middle" dx="0 0.21">09</text><text x="810.82" y="1242" text-anchor="middle" dx="0 0.21 -0.39">9.7</text><text x="810.82" y="1317" text-anchor="middle" dx="0 0.21">10</text><text x="854.44" y="1256.7" text-anchor="middle" dx="0 0.21 -0.39">7.8</text><text x="854.44" y="1317" text-anchor="middle" dx="0 0.21">11</text><text x="898.07" y="1255.1" text-anchor="middle" dx="0 0.21 -0.39">8.0</text><text x="898.07" y="1317" text-anchor="middle" dx="0 0.21">12</text><text x="941.69" y="1248" text-anchor="middle" dx="0 0.21 -0.39">8.9</text><text x="941.69" y="1317" text-anchor="middle" dx="0 0.21">13</text><text x="985.32" y="1259.3" text-anchor="middle" dx="0 0.21 -0.39">7.4</text><text x="985.32" y="1317" text-anchor="middle" dx="0 0.21">14</text><text x="1028.94" y="1243" text-anchor="middle" dx="0 0.21 -0.39">9.6</text><text x="1028.94" y="1317" text-anchor="middle" dx="0 0.21">15</text><text x="1072.57" y="1234.4" text-anchor="middle" dx="0 0.21">11</text><text x="1072.57" y="1317" text-anchor="middle" dx="0 0.21">16</text><text x="1116.19" y="1231.6" text-anchor="middle" dx="0 0.21">11</text><text x="1116.19" y="1317" text-anchor="middle" dx="0 0.21">17</text><text x="1159.82" y="1177.6" text-anchor="middle" dx="0 0.21">18</text><text x="1159.82" y="1317" text-anchor="middle" dx="0 0.21">18</text><text x="1203.44" y="1164.4" text-anchor="middle" dx="0 0.21">20</text><text x="1203.44" y="1317" text-anchor="middle" dx="0 0.21">19</text><text x="1247.07" y="1142.3" text-anchor="middle" dx="0 0.21">23</text><text x="1247.07" y="1317" text-anchor="middle" dx="0 0.21">20</text><text x="1290.69" y="1230.3" text-anchor="middle" dx="0 0.21">11</text><text x="1290.69" y="1317" text-anchor="middle" dx="0 0.21">21</text><text x="1334.32" y="1218" text-anchor="middle" dx="0 0.21">13</text><text x="1334.32" y="1317" text-anchor="middle" dx="0 0.21">22</text></svg>
<svg class="c" style="left:1164.80px;top:20.80px" width="21.8" height="21.8" viewBox="0 0 24 24" fill="none" stroke="#d9d6ea" stroke-width="1.5" stroke-linecap="round" stroke-linejoin="round"><path d="M9.879 7.519c1.171-1.025 3.071-1.025 4.242 0 1.172 1.025 1.172 2.687 0 3.712-.203.179-.43.326-.67.442-.745.361-1.45.999-1.45 1.827v.75M21 12a9 9 0 11-18 0 9 9 0 0118 0zm-9 5.25h.008v.008H12v-.008z"/></svg>
<svg class="c" style="left:1193.80px;top:20.80px" width="21.8" height="21.8" viewBox="0 0 24 24" fill="none" stroke="#d9d6ea" stroke-width="1.5" stroke-linecap="round" stroke-linejoin="round"><path d="M11.25 11.25l.041-.02a.75.75 0 011.063.852l-.708 2.836a.75.75 0 001.063.853l.041-.021M21 12a9 9 0 11-18 0 9 9 0 0118 0zm-9-3.75h.008v.008H12V8.25z"/></svg>
<svg class="c" style="left:1223.00px;top:21.00px" width="21.8" height="21.8" viewBox="0 0 24 24" fill="none" stroke="#d9d6ea" stroke-width="1.5" stroke-linecap="round" stroke-linejoin="round"><path d="M10.343 3.94c.09-.542.56-.94 1.11-.94h1.093c.55 0 1.02.398 1.11.94l.149.894c.07.424.384.764.78.93.398.164.855.142 1.205-.108l.737-.527a1.125 1.125 0 011.45.12l.773.774c.39.389.44 1.002.12 1.45l-.527.737c-.25.35-.272.806-.107 1.204.165.397.505.71.93.78l.893.15c.543.09.94.56.94 1.109v1.094c0 .55-.397 1.02-.94 1.11l-.893.149c-.425.07-.765.383-.93.78-.165.398-.143.854.107 1.204l.527.738c.32.447.269 1.06-.12 1.45l-.774.773a1.125 1.125 0 01-1.449.12l-.738-.527c-.35-.25-.806-.272-1.203-.107-.397.165-.71.505-.781.929l-.149.894c-.09.542-.56.94-1.11.94h-1.094c-.55 0-1.019-.398-1.11-.94l-.148-.894c-.071-.424-.384-.764-.781-.93-.398-.164-.854-.142-1.204.108l-.738.527c-.447.32-1.06.269-1.45-.12l-.773-.774a1.125 1.125 0 01-.12-1.45l.527-.737c.25-.35.273-.806.108-1.204-.165-.397-.505-.71-.93-.78l-.894-.15c-.542-.09-.94-.56-.94-1.109v-1.094c0-.55.398-1.02.94-1.11l.894-.149c.424-.07.765-.383.93-.78.165-.398.143-.854-.107-1.204l-.527-.738a1.125 1.125 0 01.12-1.45l.773-.773a1.125 1.125 0 011.45-.12l.737.527c.35.25.807.272 1.204.107.397-.165.71-.505.78-.929l.15-.894zM15 12a3 3 0 11-6 0 3 3 0 016 0z"/></svg>
<svg class="c" style="left:1336px;top:17px" width="34" height="30" viewBox="1336 17 34 30" fill="none" stroke="#fff" stroke-width="1.5" stroke-linecap="round"><path d="M1340.1 25 Q1351.3 17.7 1361.9 24.7"/><circle cx="1363.8" cy="26" r="1.7" stroke-width="1.2"/><path d="M1343.2 29.2 Q1351.3 24.3 1359.4 29.4"/><circle cx="1341.6" cy="30.3" r="1.7" stroke-width="1.2"/><path d="M1346.4 33.9 Q1351.3 29.6 1356.5 34.1"/><circle cx="1351.3" cy="39.7" r="2.8" stroke-width="1.5"/></svg>
<span class="t" style="left:20.30px;top:22.60px;font-size:16.6px;letter-spacing:-0.286px">AMS reader 0d6b9d86</span>
<span class="t" style="left:210.30px;top:25.50px;font-size:12.8px;letter-spacing:0.070px;color:#d1d5db">Up 1 minute</span>
<span class="t" style="left:294.00px;top:25.50px;font-size:12.8px;letter-spacing:-0.100px;color:#d1d5db">Free mem: 113.8kb</span>
<span class="t" style="left:439.95px;top:26.90px;font-size:11.0px;letter-spacing:-0.075px;font-weight:700;color:#e9fbef">3.36V</span>
<span class="t" style="left:495.95px;top:26.90px;font-size:11.0px;letter-spacing:0.050px;font-weight:700;color:#e9fbef">HAN</span>
<span class="t" style="left:547.00px;top:26.90px;font-size:11.0px;letter-spacing:-0.070px;font-weight:700;color:#e9fbef">-37dBm</span>
<span class="t" style="left:613.35px;top:26.90px;font-size:11.0px;letter-spacing:0.050px;font-weight:700;color:#f3f4f6">MQTT</span>
<span class="t" style="left:1034.10px;top:23.50px;font-size:12.8px;letter-spacing:-0.132px;color:#e8ad1a">New version: v2.4.10</span>
<span class="t" style="left:1255.00px;top:25.50px;font-size:12.8px;letter-spacing:-0.104px;color:#d1d5db">23. Oct 14:55</span>
<span class="t" style="left:94.45px;top:129.15px;font-size:14.5px;letter-spacing:0.670px">Import</span>
<span class="t" style="left:88.75px;top:154.75px;font-size:23.3px;letter-spacing:0.175px">625</span>
<span class="t" style="left:133.40px;top:163.50px;font-size:12.8px;letter-spacing:0.000px">W</span>
<span class="t" style="left:78.05px;top:187.15px;font-size:14.5px;letter-spacing:-0.262px">75.11</span>
<span class="t" style="left:117.15px;top:190.00px;font-size:10.8px;letter-spacing:-0.267px">øre/kWh</span>
<span class="t" style="left:16.60px;top:276.15px;font-size:14.5px;letter-spacing:0.162px">Aidon</span>
<span class="t" style="left:144.55px;top:276.15px;font-size:14.5px;letter-spacing:0.081px">92795 kWh</span>
<span class="t" style="left:247.10px;top:75.05px;font-size:12.7px;letter-spacing:0.150px;font-weight:700">Voltage</span>
<span class="t" style="left:476.85px;top:75.05px;font-size:12.7px;letter-spacing:-0.171px;font-weight:700">Amperage</span>
<span class="t" style="left:714.05px;top:75.05px;font-size:12.7px;letter-spacing:-0.100px;font-weight:700">Reactive</span>
<span class="t" style="left:944.75px;top:75.05px;font-size:12.7px;letter-spacing:-0.152px;font-weight:700">Real time calculations</span>
<span class="t" style="left:1168.40px;top:75.05px;font-size:12.7px;letter-spacing:-0.014px;font-weight:700">Tariff peaks</span>
<span class="t" style="left:15.75px;top:332.05px;font-size:12.7px;letter-spacing:0.056px;font-weight:700">Real time plot (W)</span>
<span class="t" style="left:15.75px;top:586.05px;font-size:12.7px;letter-spacing:-0.123px;font-weight:700">Future energy price (øre)</span>
<span class="t" style="left:15.65px;top:841.05px;font-size:12.7px;letter-spacing:-0.261px;font-weight:700">Energy use last 24 hours</span>
<span class="t" style="left:15.65px;top:1097.05px;font-size:12.7px;letter-spacing:-0.266px;font-weight:700">Energy use last 30 days (kWh)</span>
<span class="t" style="left:713.55px;top:106.50px;font-size:12.8px;letter-spacing:0.222px">Instant in</span>
<span class="t" style="left:870.80px;top:106.50px;font-size:12.8px;letter-spacing:-0.025px">0 VAr</span>
<span class="t" style="left:713.55px;top:124.50px;font-size:12.8px;letter-spacing:0.290px">Instant out</span>
<span class="t" style="left:857.45px;top:124.50px;font-size:12.8px;letter-spacing:-0.125px">496 VAr</span>
<span class="t" style="left:714.55px;top:156.50px;font-size:12.8px;letter-spacing:0.186px">Total in</span>
<span class="t" style="left:833.60px;top:156.50px;font-size:12.8px;letter-spacing:-0.065px">106.1 kVArh</span>
<span class="t" style="left:714.55px;top:174.50px;font-size:12.8px;letter-spacing:0.288px">Total out</span>
<span class="t" style="left:829.30px;top:174.50px;font-size:12.8px;letter-spacing:0.015px">13071 kVArh</span>
<span class="t" style="left:945.00px;top:111.05px;font-size:12.7px;letter-spacing:-0.300px;font-weight:700">Consumption</span>
<span class="t" style="left:944.50px;top:128.50px;font-size:12.8px;letter-spacing:0.200px">Hour</span>
<span class="t" style="left:1089.60px;top:128.50px;font-size:12.8px;letter-spacing:-0.230px">580 Wh</span>
<span class="t" style="left:944.50px;top:146.50px;font-size:12.8px;letter-spacing:-0.625px">Day</span>
<span class="t" style="left:1081.80px;top:146.50px;font-size:12.8px;letter-spacing:-0.100px">9540 Wh</span>
<span class="t" style="left:944.50px;top:164.50px;font-size:12.8px;letter-spacing:0.762px">Month</span>
<span class="t" style="left:1072.80px;top:164.50px;font-size:12.8px;letter-spacing:-0.200px">238.6 kWh</span>
<span class="t" style="left:944.50px;top:182.50px;font-size:12.8px;letter-spacing:0.111px">Last month</span>
<span class="t" style="left:1072.80px;top:182.50px;font-size:12.8px;letter-spacing:-0.200px">284.6 kWh</span>
<span class="t" style="left:945.00px;top:211.05px;font-size:12.7px;letter-spacing:-0.467px;font-weight:700">Cost</span>
<span class="t" style="left:944.50px;top:228.50px;font-size:12.8px;letter-spacing:0.200px">Hour</span>
<span class="t" style="left:1078.40px;top:228.50px;font-size:12.8px;letter-spacing:-0.386px">0.01 NOK</span>
<span class="t" style="left:944.50px;top:246.50px;font-size:12.8px;letter-spacing:-0.625px">Day</span>
<span class="t" style="left:1085.30px;top:246.50px;font-size:12.8px;letter-spacing:-0.392px">6.8 NOK</span>
<span class="t" style="left:944.50px;top:264.50px;font-size:12.8px;letter-spacing:0.762px">Month</span>
<span class="t" style="left:1081.20px;top:264.50px;font-size:12.8px;letter-spacing:-0.333px">249 NOK</span>
<span class="t" style="left:944.50px;top:282.50px;font-size:12.8px;letter-spacing:0.111px">Last month</span>
<span class="t" style="left:1081.20px;top:282.50px;font-size:12.8px;letter-spacing:-0.333px">356 NOK</span>
<span class="t" style="left:1263.60px;top:583.75px;font-size:11.3px;letter-spacing:-0.518px">Provided by: ENTSO-E</span>
<span class="t" style="left:1325.90px;top:838.75px;font-size:11.3px;letter-spacing:-0.169px">Edit data</span>
<span class="t" style="left:1325.90px;top:1094.75px;font-size:11.3px;letter-spacing:-0.169px">Edit data</span>
</body></html>
